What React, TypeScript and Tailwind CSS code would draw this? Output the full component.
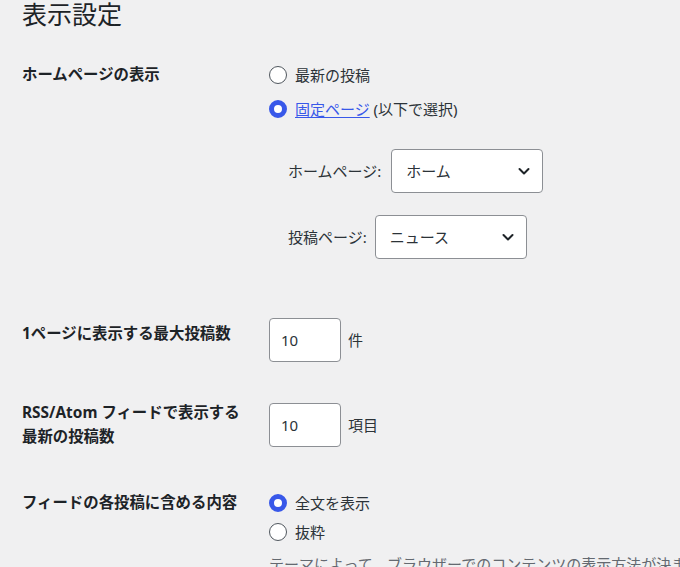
import React from 'react'

const FONT = "font-['Noto_Sans','Noto_Sans_CJK_JP',sans-serif]"

function Radio({ checked, children }: { checked?: boolean; children: React.ReactNode }) {
  return (
    <label className="flex items-center gap-[8px] h-6 text-[15px] text-[#2c3338]">
      {checked ? (
        <span className="w-[18px] h-[18px] rounded-full border-[5px] border-[#3858e9] bg-white box-border shrink-0" />
      ) : (
        <span className="w-[18px] h-[18px] rounded-full border border-[#50575e] bg-white box-border shrink-0" />
      )}
      <span>{children}</span>
    </label>
  )
}

function Select({ value }: { value: string }) {
  return (
    <div className="w-[152px] h-11 bg-white border border-[#8c8f94] rounded-[4px] flex items-center justify-between pl-[14px] pr-[11px] text-[15px] text-[#2c3338]">
      <span>{value}</span>
      <svg width="14" height="14" viewBox="0 0 14 14" fill="none">
        <path d="M2.5 5l4.5 4.5L11.5 5" stroke="#1d2327" strokeWidth="2" strokeLinecap="round" strokeLinejoin="round" />
      </svg>
    </div>
  )
}

function NumberField({ value, unit }: { value: string; unit: string }) {
  return (
    <div className="flex items-center gap-[7px]">
      <div className="w-[72px] h-11 bg-white border border-[#8c8f94] rounded-[4px] flex items-center pl-[11px] text-[15px] text-[#2c3338]">
        {value}
      </div>
      <span className="text-[15px] text-[#2c3338]">{unit}</span>
    </div>
  )
}

function Row({ label, className, children }: { label: React.ReactNode; className?: string; children: React.ReactNode }) {
  return (
    <div className={`flex items-start ${className ?? ''}`}>
      <div className="w-[247px] shrink-0 text-[15.4px] font-bold leading-6 text-[#1d2327]">{label}</div>
      <div className="flex-1 min-w-0">{children}</div>
    </div>
  )
}

export default function App() {
  return (
    <div className={`w-[680px] h-[567px] overflow-hidden bg-[#f0f0f1] pl-[22px] ${FONT}`}>
      <h1 className="text-[25px] leading-[32px] -mt-[2px] text-[#1d2327]">表示設定</h1>

      {/* front page display */}
      <Row label="ホームページの表示" className="mt-[33px]">
        <div className="flex flex-col gap-[10px]">
          <Radio>最新の投稿</Radio>
          <Radio checked>
            <a className="text-[#3858e9] underline underline-offset-2">固定ページ</a> (以下で選択)
          </Radio>
        </div>
        <div className="mt-[28px] pl-[19px] flex flex-col gap-[22px]">
          <div className="flex items-center gap-[10px]">
            <span className="text-[15px] text-[#2c3338]">ホームページ:</span>
            <Select value="ホーム" />
          </div>
          <div className="flex items-center gap-[8px]">
            <span className="text-[15px] text-[#2c3338]">投稿ページ:</span>
            <Select value="ニュース" />
          </div>
        </div>
      </Row>

      <Row label={<div className="mt-[4px]">1ページに表示する最大投稿数</div>} className="mt-[59px]">
        <NumberField value="10" unit="件" />
      </Row>

      <Row
        label={
          <div className="-mt-[2px]">
            RSS/Atom フィードで表示する
            <br />
            最新の投稿数
          </div>
        }
        className="mt-[41px]"
      >
        <NumberField value="10" unit="項目" />
      </Row>

      {/* feed content */}
      <Row label="フィードの各投稿に含める内容" className="mt-[42px]">
        <div className="flex flex-col gap-[5px]">
          <Radio checked>全文を表示</Radio>
          <Radio>抜粋</Radio>
        </div>
        <p className="mt-[8px] text-[15px] leading-6 text-[#646970] whitespace-nowrap">
          テーマによって、ブラウザーでのコンテンツの表示方法が決まります。
        </p>
      </Row>
    </div>
  )
}
